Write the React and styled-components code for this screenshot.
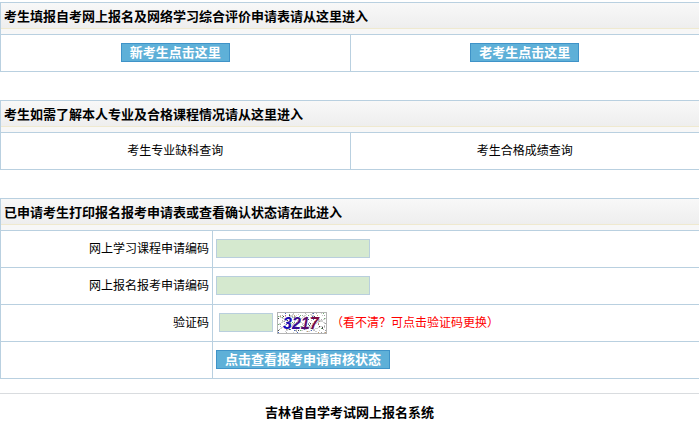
import React, { useState } from 'react'
//Styling
import styled, { createGlobalStyle } from 'styled-components'

const inks = ['#b0b0b0', '#c8c8c8', '#d4d4d4', '#a0a0a0', '#70b070', '#c05a8a', '#4a6ac0', '#c0c0c0', '#c8a070', '#444444']

//Same speckles for every render
const makeSpeckles = (count) => {
    let seed = 37
    const next = (max) => {
        seed = (seed * 16807) % 2147483647
        return Math.floor((seed / 2147483647) * max)
    }
    return Array.from({ length: count }, () => ({
        x: 1 + next(48),
        y: 1 + next(20),
        fill: inks[next(inks.length)],
    }))
}

const speckles = makeSpeckles(170)

const Captcha = () => (
    <svg width="50" height="22" viewBox="0 0 50 22" shapeRendering="crispEdges">
        <defs>
            <linearGradient id="ink" gradientUnits="userSpaceOnUse" x1="6" y1="0" x2="43" y2="0">
                <stop offset="0" stopColor="#0808c8" />
                <stop offset="1" stopColor="#8b0a30" />
            </linearGradient>
        </defs>
        <rect width="50" height="22" fill="#ffffff" />
        <path
            d="M2 4L20 15M8 20L30 2M24 19L48 7M1 13L17 2M30 20L46 14M12 3L40 20M33 2L49 12M2 18L14 9"
            stroke="#d0d0d0"
            fill="none"
        />
        {speckles.map((dot, i) => (
            <rect key={i} x={dot.x} y={dot.y} width="1" height="1" fill={dot.fill} />
        ))}
        <CaptchaText x="6" y="17" fill="url(#ink)">
            3217
        </CaptchaText>
        <rect x="0.5" y="0.5" width="49" height="21" fill="none" stroke="#b4b4b4" />
    </svg>
)

const App = () => {
    //Data
    const [form, setForm] = useState({ course: '', exam: '', captcha: '' })
    const change = (e) => setForm({ ...form, [e.target.name]: e.target.value })

    return (
        <>
            <GlobalStyle />
            <main>
                <Panel>
                    <thead>
                        <tr>
                            <Heading colSpan={2}>考生填报自考网上报名及网络学习综合评价申请表请从这里进入</Heading>
                        </tr>
                    </thead>
                    <tbody>
                        <tr>
                            <Cell $align="center">
                                <Button type="button">新考生点击这里</Button>
                            </Cell>
                            <Cell $align="center">
                                <Button type="button">老考生点击这里</Button>
                            </Cell>
                        </tr>
                    </tbody>
                </Panel>
                <Panel>
                    <thead>
                        <tr>
                            <Heading colSpan={2}>考生如需了解本人专业及合格课程情况请从这里进入</Heading>
                        </tr>
                    </thead>
                    <tbody>
                        <tr>
                            <Cell $align="center">
                                <Link href="#missing">考生专业缺科查询</Link>
                            </Cell>
                            <Cell $align="center">
                                <Link href="#scores">考生合格成绩查询</Link>
                            </Cell>
                        </tr>
                    </tbody>
                </Panel>
                <form onSubmit={(e) => e.preventDefault()}>
                    <Panel>
                        <colgroup>
                            <LabelColumn />
                            <col />
                        </colgroup>
                        <thead>
                            <tr>
                                <Heading colSpan={2}>已申请考生打印报名报考申请表或查看确认状态请在此进入</Heading>
                            </tr>
                        </thead>
                        <tbody>
                            <tr>
                                <Cell $align="right">
                                    <label htmlFor="course">网上学习课程申请编码</label>
                                </Cell>
                                <Cell>
                                    <Input id="course" name="course" value={form.course} onChange={change} />
                                </Cell>
                            </tr>
                            <tr>
                                <Cell $align="right">
                                    <label htmlFor="exam">网上报名报考申请编码</label>
                                </Cell>
                                <Cell>
                                    <Input id="exam" name="exam" value={form.exam} onChange={change} />
                                </Cell>
                            </tr>
                            <tr>
                                <Cell $align="right">
                                    <label htmlFor="captcha">验证码</label>
                                </Cell>
                                <Cell>
                                    <CaptchaRow>
                                        <Input $short id="captcha" name="captcha" value={form.captcha} onChange={change} />
                                        <CaptchaButton type="button" aria-label="更换验证码">
                                            <Captcha />
                                        </CaptchaButton>
                                        <Hint>（看不清？可点击验证码更换）</Hint>
                                    </CaptchaRow>
                                </Cell>
                            </tr>
                            <tr>
                                <Cell />
                                <Cell>
                                    <Button type="submit">点击查看报考申请审核状态</Button>
                                </Cell>
                            </tr>
                        </tbody>
                    </Panel>
                </form>
            </main>
            <Footer>吉林省自学考试网上报名系统</Footer>
        </>
    )
}

const GlobalStyle = createGlobalStyle`
    * {
        box-sizing: border-box;
    }
    body {
        margin: 0;
        padding-top: 2px;
        background: white;
        color: black;
        font: 12px/18px "Liberation Sans", "Noto Sans CJK SC", sans-serif;
    }
    button, input {
        font-family: inherit;
    }
`

const Panel = styled.table`
    width: 100%;
    table-layout: fixed;
    border-collapse: separate;
    border-spacing: 0;
    border-top: 1px solid #b9d0e0;
    form & {
        margin-bottom: 14px;
    }
    & + &, & + form {
        margin-top: 28px;
    }
`

const LabelColumn = styled.col`
    width: 212px;
`

const Heading = styled.th`
    height: 32px;
    padding: 0 3px 4px;
    border-left: 1px solid #b9d0e0;
    border-bottom: 1px solid #b9d0e0;
    background: linear-gradient(#f8f8f8, #eeeeee) 0 0 / 100% 25px no-repeat,
        linear-gradient(#efe9cf, #efe9cf) 0 25px / 100% 1px no-repeat, #f7f7f7;
    font-size: 13px;
    text-align: left;
`

const Cell = styled.td`
    height: 37px;
    padding: 0 3px 1px;
    border-left: 1px solid #b9d0e0;
    border-bottom: 1px solid #b9d0e0;
    text-align: ${({ $align }) => $align || 'left'};
`

const Button = styled.button`
    height: 19px;
    padding: 0 8px;
    border: 1px solid #3f93c8;
    background: #5eb0d8;
    color: white;
    font-size: 13px;
    font-weight: bold;
    line-height: 16px;
    vertical-align: top;
    cursor: pointer;
`

const Link = styled.a`
    color: black;
    text-decoration: none;
`

const Input = styled.input`
    width: ${({ $short }) => ($short ? '54px' : '154px')};
    height: 19px;
    padding: 0 2px;
    border: 1px solid #b9cfdd;
    background: #d5e9cf;
    font-size: 12px;
    vertical-align: top;
`

const CaptchaRow = styled.div`
    display: flex;
    align-items: center;
    gap: 4px;
    padding-left: 3px;
`

const CaptchaButton = styled.button`
    display: flex;
    padding: 0;
    border: 0;
    background: none;
    cursor: pointer;
`

const CaptchaText = styled.text`
    font: italic bold 16px 'Liberation Sans', sans-serif;
`

const Hint = styled.span`
    color: #ff0000;
`

const Footer = styled.footer`
    padding-top: 10px;
    border-top: 1px solid #d9dcdf;
    font-size: 13px;
    font-weight: bold;
    text-align: center;
`

export default App
